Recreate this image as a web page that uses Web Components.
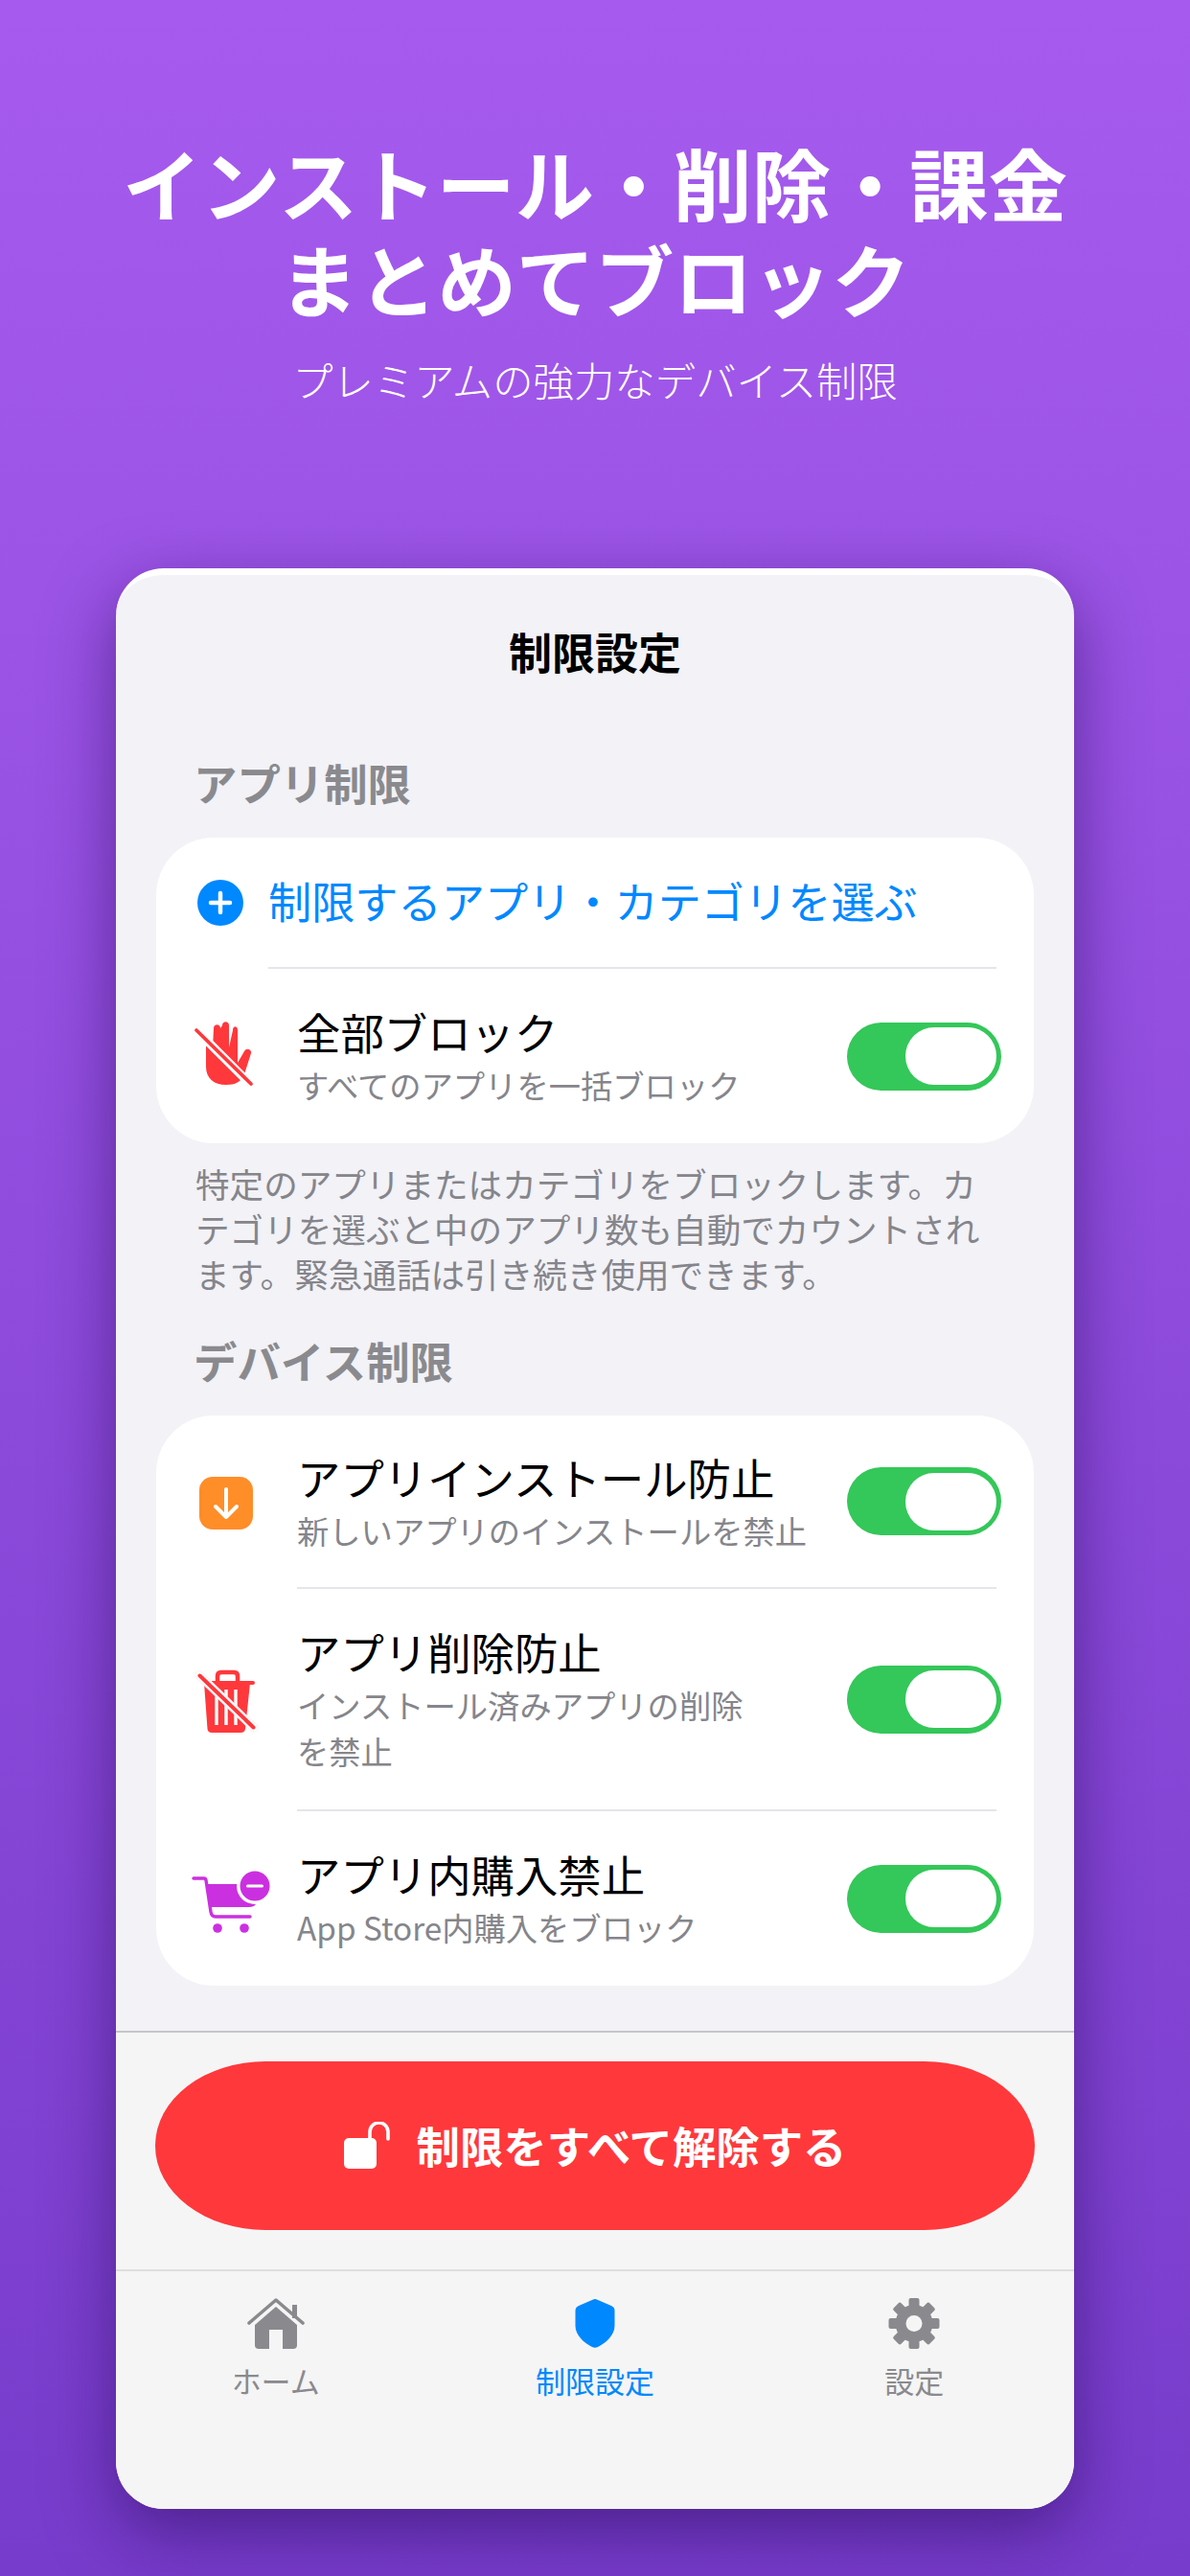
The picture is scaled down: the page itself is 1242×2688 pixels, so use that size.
<!DOCTYPE html>
<html lang="ja">
<head>
<meta charset="utf-8">
<title>制限設定</title>
<style>
    html, body { margin: 0; padding: 0; }
    body {
        width: 1242px;
        height: 2688px;
        overflow: hidden;
        font-family: 'Noto Sans CJK JP', 'Noto Sans', sans-serif;
        background: linear-gradient(to bottom, #a65bee, #773ccb);
    }
</style>
</head>
<body>
<promo-header>
    <span slot="title">インストール・削除・課金<br>まとめてブロック</span>
    <span slot="subtitle">プレミアムの強力なデバイス制限</span>
</promo-header>

<settings-card title="制限設定">
    <settings-section label="アプリ制限" note="特定のアプリまたはカテゴリをブロックします。カテゴリを選ぶと中のアプリ数も自動でカウントされます。緊急通話は引き続き使用できます。">
        <settings-link label="制限するアプリ・カテゴリを選ぶ"></settings-link>
        <row-divider style="--inset: 117px"></row-divider>
        <settings-row label="全部ブロック" detail="すべてのアプリを一括ブロック">
            <svg slot="icon" width="100" height="100" viewBox="0 3 100 100">
                <path fill="#ff383c" d="M25 43 C25 40 31 40 32 44 L33 24 C33 19 40 19 40 24 L42 21 C42 16 49 16 49 21 L49 44 L53 26 C53 21 58 21 58 26 L58 60 L65 48 C67 44 73 46 72 50 L65 72 C62 80 55 83 46 83 C33 83 25 76 25 64 Z"/>
                <path stroke="#fff" stroke-width="9" d="M13 24 L74 85"/>
                <path stroke="#ff383c" stroke-width="3.6" stroke-linecap="round" d="M15 26 L72 82"/>
            </svg>
        </settings-row>
    </settings-section>

    <settings-section label="デバイス制限">
        <settings-row label="アプリインストール防止" detail="新しいアプリのインストールを禁止" style="--row-pad: 35.5px">
            <svg slot="icon" width="100" height="100" viewBox="0 0 100 100">
                <rect x="18" y="24" width="56" height="55" rx="14" fill="#ff8d28"/>
                <path fill="none" stroke="#fff" stroke-width="4" stroke-linecap="round" stroke-linejoin="round" d="M46 37 V66 M35 55 L46 66 L57 55"/>
            </svg>
        </settings-row>
        <row-divider style="--inset: 147px"></row-divider>
        <settings-row label="アプリ削除防止" detail="インストール済みアプリの削除&#10;を禁止">
            <svg slot="icon" width="100" height="100" viewBox="0 -7 100 100">
                <path fill="none" stroke="#ff383c" stroke-width="4.5" d="M37 27 V19 Q37 15 41 15 H54 Q58 15 58 19 V27"/>
                <rect x="23" y="24" width="53" height="4" rx="2" fill="#ff383c"/>
                <path fill="#ff383c" d="M23 26 H71 L66 74 Q65.500 78 61 78 H31 Q27 78 26.500 74 Z"/>
                <path stroke="#fff" stroke-width="3.400" d="M36 33 V70 M46 33 V70 M56 33 V70"/>
                <path stroke="#ffe0e0" stroke-width="9" stroke-linecap="round" d="M18 18 L75 73"/>
                <path stroke="#fff" stroke-width="8" stroke-linecap="round" d="M18 18 L75 73"/>
                <path stroke="#ff383c" stroke-width="4" stroke-linecap="round" d="M18.500 18.500 L74.500 72.500"/>
            </svg>
        </settings-row>
        <row-divider style="--inset: 147px"></row-divider>
        <settings-row label="アプリ内購入禁止" detail="App Store内購入をブロック">
            <svg slot="icon" width="100" height="100" viewBox="0 -9 100 100">
                <path fill="#cb30e0" d="M26 26 H66 V44 L77 47 Q75 50 70 50 H30 Z"/>
                <path fill="none" stroke="#cb30e0" stroke-width="3.400" stroke-linecap="round" stroke-linejoin="round" d="M12 20 H23 Q24.500 20 25 22 L30 55 Q30.800 60 35 60 H71"/>
                <circle cx="76" cy="28" r="19" fill="#fff"/>
                <circle cx="76" cy="28" r="15.500" fill="#cb30e0"/>
                <rect x="67" y="26.500" width="18" height="3" rx="1.500" fill="#fff"/>
                <circle cx="37" cy="72" r="4.800" fill="#cb30e0"/>
                <circle cx="65" cy="72" r="4.800" fill="#cb30e0"/>
            </svg>
        </settings-row>
    </settings-section>

    <danger-button slot="footer" label="制限をすべて解除する"></danger-button>

    <tab-bar slot="tabs">
        <tab-item label="ホーム">
            <svg width="60" height="53" viewBox="0 0 60 53">
                <path fill="#8a8a8e" d="M8 28 L30 9 L52 28 V49 Q52 53 48 53 H12 Q8 53 8 49 Z"/>
                <rect x="23" y="33" width="14" height="20" fill="#f5f5f5"/>
                <path fill="none" stroke="#8a8a8e" stroke-width="3.600" stroke-linecap="round" stroke-linejoin="round" d="M2 26 L30 2 L58 26"/>
                <rect x="47" y="7" width="5" height="14" fill="#8a8a8e"/>
            </svg>
        </tab-item>
        <tab-item label="制限設定" active>
            <svg width="60" height="53" viewBox="0 0 60 53">
                <path fill="#0088ff" d="M30 1 Q31 1 33 2 L47 8 Q50.500 9.500 50.500 13 V29 C50.500 39 41 47 33 51 Q30 52.500 27 51 C19 47 9.500 39 9.500 29 V13 Q9.500 9.500 13 8 L27 2 Q29 1 30 1 Z"/>
            </svg>
        </tab-item>
        <tab-item label="設定">
            <svg width="60" height="53" viewBox="-30 -26.500 60 53">
                <g fill="#8a8a8e">
                    <circle r="19.500"/>
                    <rect x="-5.500" y="-26.500" width="11" height="53" rx="2"/>
                    <rect x="-5.500" y="-26.500" width="11" height="53" rx="2" transform="rotate(45)"/>
                    <rect x="-5.500" y="-26.500" width="11" height="53" rx="2" transform="rotate(90)"/>
                    <rect x="-5.500" y="-26.500" width="11" height="53" rx="2" transform="rotate(135)"/>
                </g>
                <circle r="8.500" fill="#f5f5f5"/>
            </svg>
        </tab-item>
    </tab-bar>
</settings-card>

<script>
class PromoHeader extends HTMLElement {
    constructor() {
        super();
        this.attachShadow({ mode: 'open' });
        this.shadowRoot.innerHTML = `
            <style>
                :host {
                    display: block;
                    padding-top: 140px;
                    text-align: center;
                    color: #fff;
                }
                .title {
                    font-size: 82.3px;
                    line-height: 100px;
                    font-weight: 700;
                }
                .subtitle {
                    margin-top: 28px;
                    font-size: 42.4px;
                    line-height: 56px;
                    font-weight: 300;
                }
            </style>
            <div class="title"><slot name="title"></slot></div>
            <div class="subtitle"><slot name="subtitle"></slot></div>
        `;
    }
}

class SettingsCard extends HTMLElement {
    constructor() {
        super();
        this.attachShadow({ mode: 'open' });
    }

    connectedCallback() {
        this.shadowRoot.innerHTML = `
            <style>
                :host {
                    display: block;
                    width: 1000px;
                    height: 2025px;
                    margin: 169px auto 0;
                    border-radius: 50px;
                    box-shadow: 0 24px 70px rgba(40, 10, 90, 0.55);
                }
                .frame {
                    display: flex;
                    flex-direction: column;
                    height: 100%;
                    box-sizing: border-box;
                    overflow: hidden;
                    border-radius: 50px;
                    border-top: 7px solid #fff;
                    background: #f2f2f7;
                }
                .title {
                    padding: 52px 0 2px;
                    text-align: center;
                    font-size: 45px;
                    line-height: 56px;
                    font-weight: 700;
                    color: #000;
                }
                .content {
                    padding: 80px 42px 47px;
                }
                .bottom {
                    flex: 1;
                    background: #f5f5f5;
                    border-top: 2px solid #c6c6c8;
                }
            </style>
            <div class="frame">
                <div class="title">${this.getAttribute('title')}</div>
                <div class="content"><slot></slot></div>
                <div class="bottom">
                    <slot name="footer"></slot>
                    <slot name="tabs"></slot>
                </div>
            </div>
        `;
    }
}

class SettingsSection extends HTMLElement {
    constructor() {
        super();
        this.attachShadow({ mode: 'open' });
    }

    connectedCallback() {
        const note = this.getAttribute('note');
        this.shadowRoot.innerHTML = `
            <style>
                :host { display: block; }
                .label {
                    padding: 0 0 4px 39px;
                    font-size: 45.4px;
                    line-height: 52px;
                    font-weight: 700;
                    color: #8a8a8e;
                }
                .group {
                    margin-top: 28px;
                    background: #fff;
                    border-radius: 60px;
                    overflow: hidden;
                }
                .note {
                    margin: 18px 0 41px;
                    padding: 0 42px 0 41px;
                    font-size: 35.6px;
                    line-height: 47px;
                    color: #85858b;
                }
            </style>
            <div class="label">${this.getAttribute('label')}</div>
            <div class="group"><slot></slot></div>
            ${note ? `<div class="note">${note}</div>` : ''}
        `;
    }
}

class SettingsLink extends HTMLElement {
    constructor() {
        super();
        this.attachShadow({ mode: 'open' });
    }

    connectedCallback() {
        this.shadowRoot.innerHTML = `
            <style>
                :host {
                    display: flex;
                    align-items: center;
                    gap: 26px;
                    height: 135px;
                    padding-left: 43px;
                    color: #0088ff;
                    font-size: 45.2px;
                }
                svg { display: block; flex: none; }
                span { padding-bottom: 5px; }
            </style>
            <svg width="48" height="48" viewBox="0 0 48 48">
                <circle cx="24" cy="24" r="24" fill="#0088ff"/>
                <path stroke="#fff" stroke-width="4.500" stroke-linecap="round" d="M24 14 V34 M14 24 H34"/>
            </svg>
            <span>${this.getAttribute('label')}</span>
        `;
    }
}

class RowDivider extends HTMLElement {
    constructor() {
        super();
        this.attachShadow({ mode: 'open' });
        this.shadowRoot.innerHTML = `
            <style>
                :host {
                    display: block;
                    height: 2px;
                    margin: 0 39px 0 var(--inset, 0);
                    background: #e5e5ea;
                }
            </style>
        `;
    }
}

class SettingsRow extends HTMLElement {
    constructor() {
        super();
        this.attachShadow({ mode: 'open' });
    }

    connectedCallback() {
        this.shadowRoot.innerHTML = `
            <style>
                :host {
                    display: flex;
                    align-items: center;
                    padding: var(--row-pad, 37px) 34px var(--row-pad, 37px) 27px;
                }
                .icon { flex: none; width: 100px; height: 100px; }
                .text { flex: 1; margin-left: 20px; }
                .label {
                    font-size: 45.4px;
                    line-height: 56px;
                    color: #000;
                }
                .detail {
                    margin-top: 4px;
                    font-size: 33.3px;
                    line-height: 48px;
                    color: #85858b;
                    white-space: pre-line;
                }
            </style>
            <div class="icon"><slot name="icon"></slot></div>
            <div class="text">
                <div class="label">${this.getAttribute('label')}</div>
                <div class="detail">${this.getAttribute('detail')}</div>
            </div>
            <toggle-switch></toggle-switch>
        `;
    }
}

class ToggleSwitch extends HTMLElement {
    constructor() {
        super();
        this.attachShadow({ mode: 'open' });
        this.shadowRoot.innerHTML = `
            <style>
                :host {
                    display: flex;
                    justify-content: flex-end;
                    align-items: center;
                    flex: none;
                    width: 161px;
                    height: 71px;
                    box-sizing: border-box;
                    padding-right: 5px;
                    background: #34c759;
                    border-radius: 36px;
                }
                .knob {
                    width: 95px;
                    height: 60px;
                    background: #fff;
                    border-radius: 30px;
                }
            </style>
            <div class="knob"></div>
        `;
    }
}

class DangerButton extends HTMLElement {
    constructor() {
        super();
        this.attachShadow({ mode: 'open' });
    }

    connectedCallback() {
        this.shadowRoot.innerHTML = `
            <style>
                :host {
                    display: flex;
                    align-items: center;
                    justify-content: center;
                    gap: 26px;
                    height: 176px;
                    margin: 30px 41px 41px;
                    background: #ff383c;
                    border-radius: 115px / 88px;
                    color: #fff;
                    font-size: 45.4px;
                    font-weight: 700;
                }
                svg { display: block; flex: none; }
                span { padding-bottom: 3px; }
            </style>
            <svg width="50" height="50" viewBox="0 0 50 50">
                <rect x="0" y="17" width="34" height="32" rx="5" fill="#fff"/>
                <path fill="none" stroke="#fff" stroke-width="3.600" stroke-linecap="round" d="M27 18 V10.500 A9.500 9.500 0 0 1 46 10.500 V18"/>
            </svg>
            <span>${this.getAttribute('label')}</span>
        `;
    }
}

class TabBar extends HTMLElement {
    constructor() {
        super();
        this.attachShadow({ mode: 'open' });
        this.shadowRoot.innerHTML = `
            <style>
                :host {
                    display: grid;
                    grid-template-columns: repeat(3, 1fr);
                    padding-top: 28px;
                    border-top: 2px solid #dedee0;
                }
            </style>
            <slot></slot>
        `;
    }
}

class TabItem extends HTMLElement {
    constructor() {
        super();
        this.attachShadow({ mode: 'open' });
    }

    connectedCallback() {
        const active = this.hasAttribute('active');
        this.shadowRoot.innerHTML = `
            <style>
                :host {
                    display: flex;
                    flex-direction: column;
                    align-items: center;
                    gap: 13px;
                    color: ${active ? '#0088ff' : '#8a8a8e'};
                    font-size: 31px;
                    line-height: 40px;
                }
                .icon { height: 53px; }
            </style>
            <div class="icon"><slot></slot></div>
            <div>${this.getAttribute('label')}</div>
        `;
    }
}

customElements.define('promo-header', PromoHeader);
customElements.define('settings-card', SettingsCard);
customElements.define('settings-section', SettingsSection);
customElements.define('settings-link', SettingsLink);
customElements.define('row-divider', RowDivider);
customElements.define('settings-row', SettingsRow);
customElements.define('toggle-switch', ToggleSwitch);
customElements.define('danger-button', DangerButton);
customElements.define('tab-bar', TabBar);
customElements.define('tab-item', TabItem);
</script>
</body>
</html>
